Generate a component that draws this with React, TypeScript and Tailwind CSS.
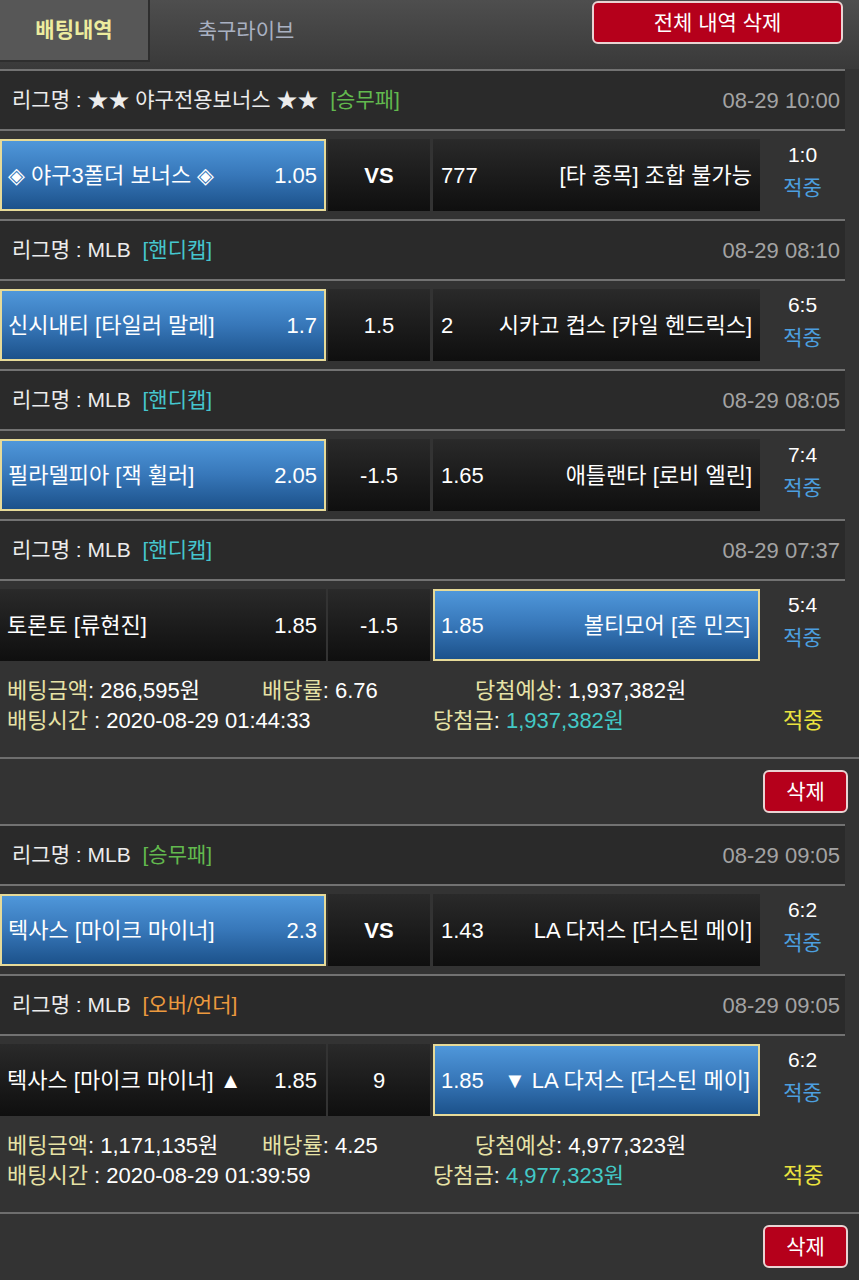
import React from "react";

type Side = {
  name: string;
  odds: string;
  picked?: boolean;
};

interface Match {
  league: string;
  tag: string;
  tagColor: string;
  time: string;
  home: Side;
  mid: string;
  midBold?: boolean;
  away: Side;
  score: string;
}

interface Bet {
  matches: Match[];
  amount: string;
  rate: string;
  expect: string;
  betTime: string;
  win: string;
}

const bets: Bet[] = [
  {
    matches: [
      {
        league: "★★ 야구전용보너스 ★★",
        tag: "[승무패]",
        tagColor: "text-[#62b94e]",
        time: "08-29 10:00",
        home: { name: "◈ 야구3폴더 보너스 ◈", odds: "1.05", picked: true },
        mid: "VS",
        midBold: true,
        away: { name: "[타 종목] 조합 불가능", odds: "777" },
        score: "1:0",
      },
      {
        league: "MLB",
        tag: "[핸디캡]",
        tagColor: "text-[#45c6cf]",
        time: "08-29 08:10",
        home: { name: "신시내티 [타일러 말레]", odds: "1.7", picked: true },
        mid: "1.5",
        away: { name: "시카고 컵스 [카일 헨드릭스]", odds: "2" },
        score: "6:5",
      },
      {
        league: "MLB",
        tag: "[핸디캡]",
        tagColor: "text-[#45c6cf]",
        time: "08-29 08:05",
        home: { name: "필라델피아 [잭 휠러]", odds: "2.05", picked: true },
        mid: "-1.5",
        away: { name: "애틀랜타 [로비 엘린]", odds: "1.65" },
        score: "7:4",
      },
      {
        league: "MLB",
        tag: "[핸디캡]",
        tagColor: "text-[#45c6cf]",
        time: "08-29 07:37",
        home: { name: "토론토 [류현진]", odds: "1.85" },
        mid: "-1.5",
        away: { name: "볼티모어 [존 민즈]", odds: "1.85", picked: true },
        score: "5:4",
      },
    ],
    amount: "286,595원",
    rate: "6.76",
    expect: "1,937,382원",
    betTime: "2020-08-29 01:44:33",
    win: "1,937,382원",
  },
  {
    matches: [
      {
        league: "MLB",
        tag: "[승무패]",
        tagColor: "text-[#62b94e]",
        time: "08-29 09:05",
        home: { name: "텍사스 [마이크 마이너]", odds: "2.3", picked: true },
        mid: "VS",
        midBold: true,
        away: { name: "LA 다저스 [더스틴 메이]", odds: "1.43" },
        score: "6:2",
      },
      {
        league: "MLB",
        tag: "[오버/언더]",
        tagColor: "text-[#ec9a3e]",
        time: "08-29 09:05",
        home: { name: "텍사스 [마이크 마이너] ▲", odds: "1.85" },
        mid: "9",
        away: { name: "▼ LA 다저스 [더스틴 메이]", odds: "1.85", picked: true },
        score: "6:2",
      },
    ],
    amount: "1,171,135원",
    rate: "4.25",
    expect: "4,977,323원",
    betTime: "2020-08-29 01:39:59",
    win: "4,977,323원",
  },
];

const cellBase = "h-[72px] flex items-center text-[22px] text-white whitespace-nowrap";
const pickedCell =
  "border-2 border-[#e6da98] bg-gradient-to-b from-[#4f97da] via-[#3777b9] to-[#1c528b]";
const darkCell = "bg-gradient-to-b from-[#2a2a2a] to-[#0f0f0f]";

const MatchBlock: React.FC<{ m: Match }> = ({ m }) => (
  <>
    {/* League */}
    <div className="h-[62px] w-[845px] border-y-2 border-[#727272] bg-[#2a2a2a] flex items-center justify-between pl-3 pr-[5px]">
      <span className="text-[21px] text-[#ececec]">
        리그명 : {m.league}{" "}
        <span className={`ml-1.5 ${m.tagColor}`}>{m.tag}</span>
      </span>
      <span className="text-[22px] text-[#a3a3a3]">{m.time}</span>
    </div>

    {/* Match row */}
    <div className="h-[88px] w-[845px] py-2 flex">
      <div
        className={`${cellBase} w-[326px] justify-between ${
          m.home.picked ? pickedCell + " pl-1.5 pr-[7px]" : darkCell + " pl-[7px] pr-[9px]"
        }`}
      >
        <span>{m.home.name}</span>
        <span>{m.home.odds}</span>
      </div>
      <div
        className={`${cellBase} ${darkCell} ml-[2px] w-[102px] justify-center ${
          m.midBold ? "font-bold" : ""
        }`}
      >
        {m.mid}
      </div>
      <div
        className={`${cellBase} ml-[3px] w-[327px] justify-between ${
          m.away.picked ? pickedCell + " pl-1.5 pr-2" : darkCell + " pl-2 pr-2"
        }`}
      >
        <span>{m.away.odds}</span>
        <span>{m.away.name}</span>
      </div>
      <div className="flex-1 flex flex-col items-center justify-center pb-2 text-[21px] leading-[33px]">
        <span className="text-white">{m.score}</span>
        <span className="text-[#4c9fdf]">적중</span>
      </div>
    </div>
  </>
);

const DeleteButton: React.FC<{ label: string; className?: string }> = ({
  label,
  className,
}) => (
  <button
    className={`rounded-md border-2 border-[#e9d3d3] bg-[#b5001b] text-white text-[21px] flex items-center justify-center ${className}`}
  >
    {label}
  </button>
);

export default function App() {
  return (
    <div className="w-[859px] min-h-[1280px] bg-[#333333] font-['Liberation_Sans','Noto_Sans_CJK_KR',sans-serif]">
      {/* Header */}
      <div className="h-[69px] bg-gradient-to-b from-[#4e4e4e] to-[#393939] flex items-start">
        <div className="w-[150px] h-[62px] bg-[#575757] border-r-2 border-b-2 border-[#2e2e2e] flex items-center justify-center">
          <span className="text-[21px] font-bold text-[#ecec9e]">배팅내역</span>
        </div>
        <div className="w-[192px] h-[62px] flex items-center justify-center">
          <span className="text-[21px] text-[#a9b1c2]">축구라이브</span>
        </div>
        <div className="flex-1 flex justify-end pr-4 pt-px">
          <DeleteButton label="전체 내역 삭제" className="w-[251px] h-[43px]" />
        </div>
      </div>

      {bets.map((bet, i) => (
        <div key={i}>
          {bet.matches.map((m, j) => (
            <MatchBlock key={j} m={m} />
          ))}

          {/* Summary */}
          <div className="h-[90px] border-b-2 border-[#6e6e6e] pl-[7px] pt-[7px] text-[22px] leading-[30px] text-white whitespace-nowrap">
            <div className="flex">
              <span className="w-[255px]">
                <span className="text-[#e6e2a6]">베팅금액</span>: {bet.amount}
              </span>
              <span className="w-[213px]">
                <span className="text-[#e6e2a6]">배당률</span>: {bet.rate}
              </span>
              <span>
                <span className="text-[#e6e2a6]">당첨예상</span>: {bet.expect}
              </span>
            </div>
            <div className="flex">
              <span className="w-[426px]">
                <span className="text-[#e6e2a6]">배팅시간</span> : {bet.betTime}
              </span>
              <span className="w-[350px]">
                <span className="text-[#e6e2a6]">당첨금</span>:{" "}
                <span className="text-[#43c9c6]">{bet.win}</span>
              </span>
              <span className="text-[#ebe33f]">적중</span>
            </div>
          </div>

          {/* Delete */}
          <div className="h-[65px] flex items-center justify-end pr-[11px]">
            <DeleteButton label="삭제" className="w-[85px] h-[43px]" />
          </div>
        </div>
      ))}
    </div>
  );
}
